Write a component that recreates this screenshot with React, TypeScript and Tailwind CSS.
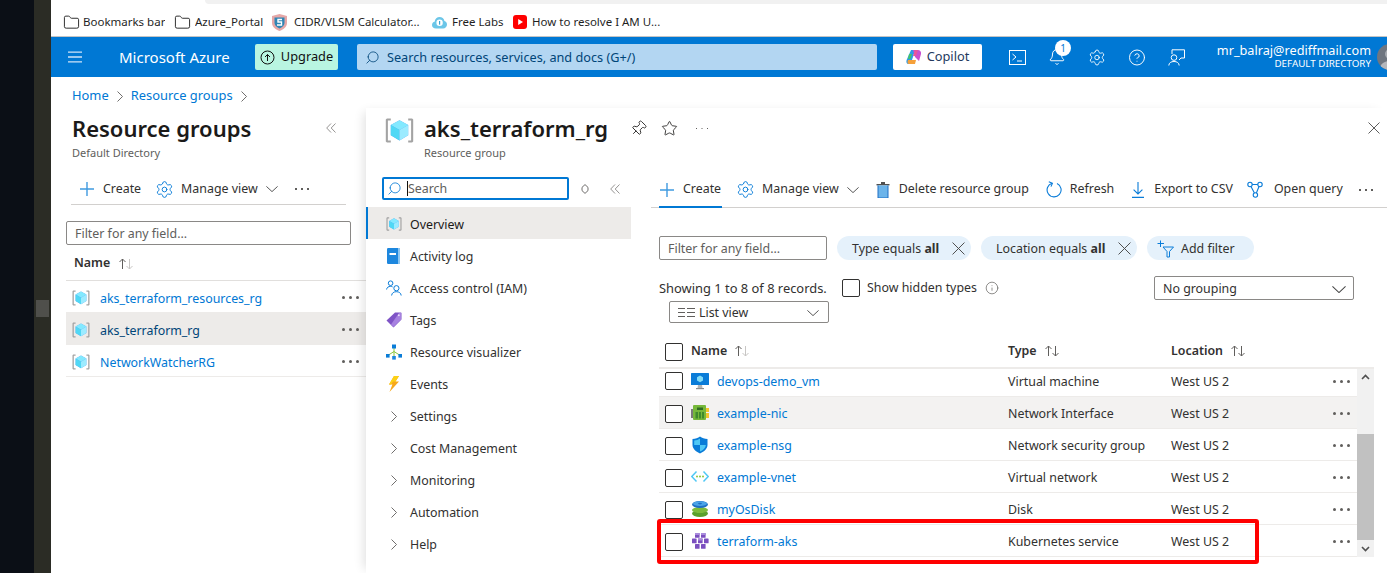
import React from 'react'
import { Bell, CircleHelp, Folder, Info, Pin, Search, Settings, Star } from 'lucide-react'

const RgIcon = ({ size = 18 }: { size?: number }) => (
  <svg width={size} height={size} viewBox="0 0 18 18" fill="none" className="shrink-0">
    <path d="M3.6 1.5H1.2L0.5 2.2V15.8L1.2 16.5H3.6V15.2H1.8V2.8H3.6Z" fill="#a3a3a3" />
    <path d="M14.4 1.5H16.8L17.5 2.2V15.8L16.8 16.5H14.4V15.2H16.2V2.8H14.4Z" fill="#a3a3a3" />
    <path d="M9 2.6L14.4 5.6V12L9 15.2L3.6 12V5.6Z" fill="#5ea0ef" />
    <path d="M9 2.6L14.4 5.6L9 8.7L3.6 5.6Z" fill="#83e9ff" />
    <path d="M3.6 5.6L9 8.7V15.2L3.6 12Z" fill="#50d8f5" />
    <path d="M14.4 5.6L9 8.7V15.2L14.4 12Z" fill="#9cebff" />
  </svg>
)

const VmIcon = () => (
  <svg width="18" height="18" viewBox="0 0 18 18" className="shrink-0">
    <rect x="0" y="1" width="18" height="12" rx="0.6" fill="#0a7cd8" />
    <path d="M9 3.5L12 5.2V8.6L9 10.3L6 8.6V5.2Z" fill="#83dcf7" />
    <path d="M7 13H11L11.5 16H6.5Z" fill="#b5b5b5" />
    <rect x="5" y="16" width="8" height="1.2" fill="#8f8f8f" />
  </svg>
)

const NicIcon = () => (
  <svg width="18" height="18" viewBox="0 0 18 18" className="shrink-0">
    <rect x="0" y="5" width="3" height="9" fill="#7a7a7a" />
    <rect x="15" y="4" width="3" height="4" fill="#f2c52c" />
    <rect x="15" y="9" width="3" height="5" fill="#f2c52c" />
    <rect x="2" y="1" width="13" height="15" rx="1" fill="#76b83a" />
    <rect x="6" y="3.5" width="6" height="2.5" fill="#2f6b22" />
    <path d="M4.5 14.5V8H7V14.5ZM8 14.5V8H10V14.5ZM11 14.5V8H13V14.5Z" fill="#3f8a2c" />
  </svg>
)

const NsgIcon = () => (
  <svg width="18" height="18" viewBox="0 0 18 18" className="shrink-0">
    <path d="M9 0.5C11 2 13.5 2.8 16.5 3V9C16.5 13 12.5 16 9 17.5C5.5 16 1.5 13 1.5 9V3C4.5 2.8 7 2 9 0.5Z" fill="#0a7cd8" />
    <path d="M9 2.5V9H3.2V4.6C5.4 4.3 7.4 3.7 9 2.5Z" fill="#50c8f5" />
    <path d="M9 9H14.8C14.6 12 11.8 14.4 9 15.6Z" fill="#50c8f5" />
  </svg>
)

const VnetIcon = () => (
  <svg width="18" height="18" viewBox="0 0 18 18" fill="none" className="shrink-0">
    <path d="M5.5 3.5L0.8 8.5L5.5 13.5" stroke="#50c8f5" strokeWidth="1.5" />
    <path d="M12.5 3.5L17.2 8.5L12.5 13.5" stroke="#50c8f5" strokeWidth="1.5" />
    <circle cx="6" cy="8.5" r="1" fill="#8cc63f" />
    <circle cx="9" cy="8.5" r="1" fill="#8cc63f" />
    <circle cx="12" cy="8.5" r="1" fill="#8cc63f" />
  </svg>
)

const DiskIcon = () => (
  <svg width="18" height="18" viewBox="0 0 18 18" className="shrink-0">
    <ellipse cx="9" cy="13.5" rx="8" ry="3.5" fill="#5aa02c" />
    <rect x="6" y="8" width="6" height="5" fill="#76b83a" />
    <ellipse cx="9" cy="10" rx="8" ry="3" fill="#7dbb3c" />
    <ellipse cx="9" cy="4.5" rx="8" ry="3.5" fill="#1f6fc4" />
    <ellipse cx="9" cy="3.6" rx="7" ry="2.4" fill="#4aa3e8" />
    <ellipse cx="9" cy="3.6" rx="2" ry="0.8" fill="#1f6fc4" />
  </svg>
)

const AksIcon = () => (
  <svg width="18" height="18" viewBox="0 0 18 18" className="shrink-0">
    {[
      [4, 1],
      [10, 1],
      [1, 6.5],
      [7, 6.5],
      [13, 6.5],
      [4, 12],
      [10, 12],
    ].map(([x, y]) => (
      <rect key={`${x}-${y}`} x={x} y={y} width="4.6" height="4.8" rx="0.6" fill="#7b4fbf" />
    ))}
    <rect x="7" y="6.5" width="4.6" height="2" fill="#a98bdc" />
    <rect x="4" y="1" width="4.6" height="2" fill="#a98bdc" />
    <rect x="10" y="1" width="4.6" height="2" fill="#a98bdc" />
  </svg>
)

const BookIcon = () => (
  <svg width="16" height="16" viewBox="0 0 16 16" className="shrink-0">
    <rect x="1" y="0" width="13" height="16" rx="1.2" fill="#1d87de" />
    <rect x="12" y="0" width="2" height="16" fill="#8cc6f2" />
    <rect x="3.5" y="5" width="6.5" height="2" fill="#fff" />
  </svg>
)

const IamIcon = () => (
  <svg width="16" height="16" viewBox="0 0 16 16" fill="none" stroke="#0a7cd8" strokeWidth="1" className="shrink-0">
    <circle cx="4.6" cy="3.2" r="2.3" />
    <path d="M0.6 9.5C0.8 7.4 2.4 6.4 4.6 6.4C5.4 6.4 6 6.5 6.6 6.9" />
    <circle cx="10.4" cy="8.2" r="2.6" />
    <path d="M5.6 15.5C5.9 12.9 7.8 11.7 10.4 11.7C13 11.7 14.9 12.9 15.2 15.5" />
  </svg>
)

const TagIcon = () => (
  <svg width="16" height="16" viewBox="0 0 16 16" className="shrink-0">
    <path d="M9 0.5H15L15.5 1V7.5L7.5 15.5L0.5 8.5Z" fill="#7f54c6" />
    <path d="M15 1V7.5L7.5 15L5 12.5L13 1Z" fill="#a781e0" />
    <circle cx="12.8" cy="3.2" r="1" fill="#e8dcf8" />
  </svg>
)

const VisualizerIcon = () => (
  <svg width="16" height="16" viewBox="0 0 16 16" className="shrink-0">
    <path d="M8 4V13M8 7.5L2.5 11M8 7.5L13.5 11" stroke="#8cc63f" strokeWidth="1" fill="none" />
    <rect x="6" y="0.5" width="4" height="4" fill="#0a7cd8" />
    <rect x="0" y="10" width="3.6" height="3.6" fill="#0a7cd8" />
    <rect x="12.4" y="10" width="3.6" height="3.6" fill="#0a7cd8" />
    <rect x="6.2" y="12" width="3.6" height="3.6" fill="#1d87de" />
  </svg>
)

const BoltIcon = () => (
  <svg width="16" height="16" viewBox="0 0 16 16" className="shrink-0">
    <path d="M8 0H13L9.5 5.6H13L3.5 16L6.4 8.4H3Z" fill="#f7a81b" />
    <path d="M8 0H13L9.5 5.6H7L5 8.4H3Z" fill="#fcd116" />
  </svg>
)

const QueryIcon = () => (
  <svg width="16" height="18" viewBox="0 0 16 18" fill="none" stroke="#0a7cd8" strokeWidth="1.1" className="ml-[14px] shrink-0">
    <circle cx="3" cy="3.5" r="2.2" />
    <circle cx="13" cy="3.5" r="2.2" />
    <circle cx="8.4" cy="14" r="2.2" />
    <path d="M5.2 3.5H10.8M4 5.5L7.4 12M12 5.5L9.4 12" />
  </svg>
)

const FilterAddIcon = () => (
  <svg width="18" height="18" viewBox="0 0 18 18" fill="none" stroke="#0a7cd8" strokeWidth="1" className="shrink-0">
    <path d="M3.5 0.5V7M0.5 3.5H7" />
    <path d="M6 7H16.5L12.5 11.5V17H10V11.5Z" />
  </svg>
)

const TerminalIcon = () => (
  <svg width="17" height="15" viewBox="0 0 17 15" fill="none" stroke="#fff" strokeWidth="1" className="shrink-0">
    <rect x="0.5" y="0.5" width="16" height="14" />
    <path d="M3.5 4L7 7L3.5 10M8 11H13" />
  </svg>
)

const FeedbackIcon = () => (
  <svg width="17" height="17" viewBox="0 0 17 17" fill="none" stroke="#fff" strokeWidth="1" className="shrink-0">
    <path d="M4 5V0.8H16.5V9H13L11 11" />
    <circle cx="6" cy="8.6" r="2.8" />
    <path d="M0.8 16.5C1 13.8 3 12.5 6 12.5C9 12.5 11 13.8 11.2 16.5" />
  </svg>
)

const CopilotIcon = () => (
  <svg width="16" height="16" viewBox="0 0 16 16" className="shrink-0">
    <path d="M5 1H9L7 8L4.5 15H2.5C0.5 15 0 13 0.6 11Z" fill="#2c9be8" />
    <path d="M7 1H12C14 1 15.5 3 15 5L13 12L9 8Z" fill="#c84fd0" />
    <path d="M2 11H10L9 15H3C1.5 15 1 13 2 11Z" fill="#f6a03a" />
    <path d="M9 1H12L10 7H7Z" fill="#e7569a" />
    <path d="M3 5H6L4.5 10H2Z" fill="#43c36b" />
  </svg>
)

const ShieldIcon = () => (
  <svg width="15" height="17" viewBox="0 0 15 17" className="shrink-0">
    <path d="M7.5 0L15 2V9C15 13 11 15.6 7.5 17C4 15.6 0 13 0 9V2Z" fill="#e5a7a7" />
    <path d="M2.5 3.5H12.5V9C12.5 11.5 10 13.5 7.5 14.5C5 13.5 2.5 11.5 2.5 9Z" fill="#2f86b5" />
    <path d="M10 5.5H6V8H9.5V11H5" stroke="#fff" strokeWidth="1.4" fill="none" />
  </svg>
)

const LabsIcon = () => (
  <svg width="15" height="13" viewBox="0 0 15 13" className="shrink-0">
    <path d="M4 12.5C1.5 12.5 0 11 0 9C0 7.2 1.2 6 2.6 5.8C3 2.8 5 1 7.6 1C10 1 12 2.6 12.4 5C14 5.4 15 6.8 15 8.6C15 11 13.4 12.5 11 12.5Z" fill="#6cc6e8" />
    <circle cx="7.6" cy="6.8" r="3.2" fill="#fff" />
    <rect x="7" y="5" width="1.2" height="3.6" fill="#3ba4d4" />
  </svg>
)

const YoutubeIcon = () => (
  <svg width="14" height="14" viewBox="0 0 14 14" className="shrink-0">
    <rect width="14" height="14" rx="3" fill="#f00" />
    <path d="M5.2 4L10 7L5.2 10Z" fill="#fff" />
  </svg>
)

const PlusIcon = ({ className = '' }: { className?: string }) => (
  <svg width="14" height="14" viewBox="0 0 14 14" fill="none" stroke="#3f9ae0" strokeWidth="1.4" className={`shrink-0 ${className}`}>
    <path d="M7 0V14M0 7H14" />
  </svg>
)

const XIcon = ({ size = 12, className = '' }: { size?: number; className?: string }) => (
  <svg width={size} height={size} viewBox="0 0 12 12" fill="none" stroke="#4a4a4a" strokeWidth="0.9" className={`shrink-0 ${className}`}>
    <path d="M0.5 0.5L11.5 11.5M11.5 0.5L0.5 11.5" />
  </svg>
)

const ChevronDownIcon = ({ size = 12, className = '' }: { size?: number; className?: string }) => (
  <svg width={size} height={size / 2} viewBox="0 0 12 6" fill="none" stroke="#444" strokeWidth="0.9" className={`shrink-0 ${className}`}>
    <path d="M0.4 0.4L6 5.6L11.6 0.4" />
  </svg>
)

const ChevronRightIcon = ({ className = '' }: { className?: string }) => (
  <svg width="6" height="11" viewBox="0 0 6 11" fill="none" stroke="#605e5c" strokeWidth="0.9" className={`shrink-0 ${className}`}>
    <path d="M0.5 0.5L5.5 5.5L0.5 10.5" />
  </svg>
)

const DoubleLeftIcon = ({ className = '' }: { className?: string }) => (
  <svg width="10" height="10" viewBox="0 0 10 10" fill="none" stroke="#8a8886" strokeWidth="0.9" className={`shrink-0 ${className}`}>
    <path d="M5 0.5L0.7 5L5 9.5M9.5 0.5L5.2 5L9.5 9.5" />
  </svg>
)

const UpDownIcon = () => (
  <svg width="8" height="10" viewBox="0 0 8 10" fill="none" stroke="#605e5c" strokeWidth="0.9" className="ml-[12px] shrink-0">
    <path d="M4 0.6L7 3.4V6.6L4 9.4L1 6.6V3.4Z" />
  </svg>
)

const TrashIcon = () => (
  <svg width="14" height="16" viewBox="0 0 14 16" className="ml-[17px] shrink-0">
    <rect x="5" y="0" width="4" height="2" fill="#505050" />
    <rect x="0.5" y="2" width="13" height="1.4" fill="#505050" />
    <rect x="2" y="3.4" width="10" height="12.6" fill="#6cb4ea" />
    <path d="M2 3.4V16H12V3.4" fill="none" stroke="#1f6fc4" />
  </svg>
)

const RefreshIcon = () => (
  <svg width="16" height="17" viewBox="0 0 16 17" fill="none" stroke="#0a7cd8" strokeWidth="1.1" className="ml-[17px] shrink-0">
    <path d="M6 2.2A7 7 0 1 0 11 2.5" />
    <path d="M2.8 0.8L6.4 2.2L5 5.6" />
  </svg>
)

const DownloadIcon = () => (
  <svg width="12" height="16" viewBox="0 0 12 16" fill="none" stroke="#0a7cd8" strokeWidth="1.1" className="ml-[18px] shrink-0">
    <path d="M6 0V12M1.6 7.6L6 12L10.4 7.6M0 15.4H12" />
  </svg>
)

const MenuIcon = () => (
  <svg width="14" height="12" viewBox="0 0 14 12" stroke="#cfe4f7" strokeWidth="1.3" className="ml-[17px] shrink-0">
    <path d="M0 1.2H14M0 6H14M0 10.8H14" />
  </svg>
)

const Avatar = () => (
  <svg width="26" height="26" viewBox="0 0 26 26" className="ml-[6px] shrink-0">
    <clipPath id="avatar-clip">
      <circle cx="13" cy="13" r="13" />
    </clipPath>
    <g clipPath="url(#avatar-clip)">
      <rect width="26" height="26" fill="#6f7680" />
      <circle cx="13" cy="10" r="5" fill="#a8acb2" />
      <ellipse cx="13" cy="24" rx="10" ry="7" fill="#b4b7bc" />
    </g>
  </svg>
)

const Dots = () => (
  <span className="flex w-[17px] shrink-0 items-center justify-between">
    <span className="size-[3px] rounded-full bg-[#605e5c]" />
    <span className="size-[3px] rounded-full bg-[#605e5c]" />
    <span className="size-[3px] rounded-full bg-[#605e5c]" />
  </span>
)

const ToolbarDots = ({ small, className = '' }: { small?: boolean; className?: string }) => (
  <svg width={small ? 12 : 14} height={small ? 1 : 2} viewBox={small ? '0 0 12 1' : '0 0 14 2'} fill="#605e5c" className={`shrink-0 ${className}`}>
    <rect x="0" width={small ? 1 : 2} height="2" />
    <rect x={small ? 5.5 : 6} width={small ? 1 : 2} height="2" />
    <rect x={small ? 11 : 12} width={small ? 1 : 2} height="2" />
  </svg>
)

const SortArrows = ({ dim }: { dim?: boolean }) => (
  <svg width="16" height="12" viewBox="0 0 16 12" fill="none" className="shrink-0">
    <path d="M4.5 11V1M1.5 4L4.5 1L7.5 4" stroke="#605e5c" />
    <path d="M11.5 1V11M8.5 8L11.5 11L14.5 8" stroke={dim ? '#c8c6c4' : '#605e5c'} />
  </svg>
)

const Bookmark = ({ icon, label, className }: { icon: React.ReactNode; label: string; className: string }) => (
  <div className={`flex shrink-0 items-center ${className}`}>
    {icon}
    <span className="truncate">{label}</span>
  </div>
)

const navItems: { label: string; icon: React.ReactNode }[] = [
  { label: 'Activity log', icon: <BookIcon /> },
  { label: 'Access control (IAM)', icon: <IamIcon /> },
  { label: 'Tags', icon: <TagIcon /> },
  { label: 'Resource visualizer', icon: <VisualizerIcon /> },
  { label: 'Events', icon: <BoltIcon /> },
]

const navGroups = ['Settings', 'Cost Management', 'Monitoring', 'Automation', 'Help']

const resources = [
  { name: 'devops-demo_vm', type: 'Virtual machine', icon: <VmIcon /> },
  { name: 'example-nic', type: 'Network Interface', icon: <NicIcon /> },
  { name: 'example-nsg', type: 'Network security group', icon: <NsgIcon /> },
  { name: 'example-vnet', type: 'Virtual network', icon: <VnetIcon /> },
  { name: 'myOsDisk', type: 'Disk', icon: <DiskIcon /> },
  { name: 'terraform-aks', type: 'Kubernetes service', icon: <AksIcon /> },
]

const groups = ['aks_terraform_resources_rg', 'aks_terraform_rg', 'NetworkWatcherRG']

const Checkbox = () => <span className="block size-[18px] shrink-0 rounded-[2px] border border-[#323130] bg-white" />

const App = () => {
  return (
    <div className="flex h-[573px] w-[1387px] overflow-hidden whitespace-nowrap bg-white font-['Noto_Sans',sans-serif] text-[12.4px] text-[#323130]">
      {/* desktop strip on the far left */}
      <div className="flex w-[51px] shrink-0">
        <div className="w-[34px] bg-[#0b0f16]" />
        <div className="w-[17px] bg-[#2b2c25] pl-[2px] pt-[300px]">
          <div className="h-[17px] w-[13px] bg-[#4f4f4b]" />
        </div>
      </div>

      <div className="flex min-w-0 flex-1 flex-col">
        {/* browser bookmarks */}
        <div className="flex h-[37px] shrink-0 flex-col border-b border-[#c4c4c4]">
          <div className="ml-[154px] h-[4px] rounded-bl-md bg-[#f1f1f1]" />
          <div className="flex h-[32px] items-center pl-[12px] pt-[4px] text-[11.5px] text-[#1f1f1f]">
            <Bookmark icon={<Folder size={17} strokeWidth={1.3} />} label="Bookmarks bar" className="w-[111px] gap-[3px]" />
            <Bookmark icon={<Folder size={17} strokeWidth={1.3} />} label="Azure_Portal" className="w-[98px] gap-[4px]" />
            <Bookmark icon={<ShieldIcon />} label="CIDR/VLSM Calculator..." className="w-[160px] gap-[7px]" />
            <Bookmark icon={<LabsIcon />} label="Free Labs" className="w-[81px] gap-[5px]" />
            <Bookmark icon={<YoutubeIcon />} label="How to resolve I AM U..." className="w-[150px] gap-[5px]" />
          </div>
        </div>

        {/* portal header */}
        <header className="flex h-[40px] shrink-0 items-center overflow-hidden bg-[#0078d4] text-white">
          <MenuIcon />
          <span className="ml-[37px] w-[136px] shrink-0 text-[15px]">Microsoft Azure</span>
          <div className="flex h-[26px] w-[83px] shrink-0 items-center justify-center gap-[6px] rounded-[2px] bg-[#b9f5e1] text-[12.8px] text-[#111]">
            <svg width="15" height="15" viewBox="0 0 15 15" fill="none" stroke="#111" strokeWidth="1" className="shrink-0">
              <circle cx="7.5" cy="7.5" r="6.5" />
              <path d="M7.5 11V4.5M5 7L7.5 4.5L10 7" />
            </svg>
            Upgrade
          </div>
          <div className="ml-[19px] flex h-[26px] w-[520px] shrink-0 items-center gap-[7px] rounded-[2px] bg-[#b3d6f2] pl-[8px] pt-[1px] text-[12.7px] text-[#004578]">
            <Search size={15} strokeWidth={1.3} className="-scale-x-100" />
            Search resources, services, and docs (G+/)
          </div>
          <div className="ml-[16px] flex h-[26px] w-[89px] shrink-0 items-center justify-center gap-[5px] rounded-[2px] bg-white text-[12.8px] text-[#243a5e]">
            <CopilotIcon />
            Copilot
          </div>
          <div className="ml-[27px] flex w-[176px] shrink-0 items-center gap-[22px]">
            <TerminalIcon />
            <div className="relative">
              <Bell size={18} strokeWidth={1.3} />
              <span className="absolute -top-[8px] left-[7px] flex size-[16px] items-center justify-center rounded-full bg-white text-[10px] text-[#0078d4]">
                1
              </span>
            </div>
            <Settings size={19} strokeWidth={1.2} />
            <CircleHelp size={19} strokeWidth={1.3} />
            <FeedbackIcon />
          </div>
          <div className="flex w-[186px] shrink-0 flex-col items-end leading-[14px]">
            <span className="text-[12.7px]">mr_balraj@rediffmail.com</span>
            <span className="text-[9.8px]">DEFAULT DIRECTORY</span>
          </div>
          <Avatar />
        </header>

        {/* breadcrumb */}
        <nav className="flex h-[31px] shrink-0 items-center gap-[8px] pl-[21px] pt-[7px] text-[12.9px] text-[#0078d4]">
          <span>Home</span>
          <ChevronRightIcon />
          <span>Resource groups</span>
          <ChevronRightIcon />
        </nav>

        <div className="flex min-h-0 flex-1">
          {/* resource groups blade */}
          <aside className="w-[315px] shrink-0 pl-[15px] pt-[4px]">
            <div className="flex items-center pl-[6px] pr-[30px]">
              <h1 className="flex-1 text-[22px] font-semibold leading-[32px] text-[#1b1a19]">Resource groups</h1>
              <DoubleLeftIcon />
            </div>
            <p className="h-[17px] pl-[6px] pt-[1px] text-[11px] leading-[16px] text-[#605e5c]">Default Directory</p>
            <div className="ml-[5px] mr-[20px] mt-[10px] flex h-[34px] items-center border-b border-[#d2d0ce] pl-[9px] pt-[3px]">
              <PlusIcon />
              <span className="ml-[9px]">Create</span>
              <Settings size={19} strokeWidth={1.2} className="ml-[14px] shrink-0 text-[#0a7cd8]" />
              <span className="ml-[7px]">Manage view</span>
              <ChevronDownIcon className="ml-[8px]" />
              <ToolbarDots className="ml-[17px]" />
            </div>
            <div className="mt-[16px] flex h-[24px] w-[285px] items-center rounded-[2px] border border-[#8a8886] pl-[8px] pt-[2px] text-[#605e5c]">
              Filter for any field...
            </div>
            <div className="flex h-[36px] items-center gap-[8px] border-b border-[#e1dfdd] pl-[8px] pt-[2px] font-semibold">
              Name
              <SortArrows dim />
            </div>
            {groups.map((group, i) => (
              <div
                key={group}
                className={`flex h-[32px] items-center border-b border-[#edebe9] pl-[6px] pr-[7px] pt-[2px] ${i === 1 ? 'bg-[#edebe9] text-[#004578]' : 'text-[#0078d4]'}`}
              >
                <RgIcon />
                <span className="ml-[10px] flex-1 pt-[4px]">{group}</span>
                <Dots />
              </div>
            ))}
          </aside>

          {/* resource group blade */}
          <main className="relative flex min-w-0 flex-1 flex-col shadow-[-6px_0_10px_-4px_rgba(0,0,0,0.12)]">
            <div className="flex h-[64px] shrink-0 pt-[4px]">
              <div className="ml-[19px] mr-[10px] mt-[4px]">
                <RgIcon size={29} />
              </div>
              <div className="flex-1">
                <div className="flex items-center">
                  <h1 className="text-[22px] font-semibold leading-[32px] text-[#1b1a19]">aks_terraform_rg</h1>
                  <Pin size={17} strokeWidth={1.3} className="ml-[22px] rotate-45" />
                  <Star size={17} strokeWidth={1.3} className="ml-[14px]" />
                  <ToolbarDots small className="ml-[18px]" />
                  <XIcon className="ml-auto mr-[7px]" />
                </div>
                <p className="pt-[1px] text-[11px] leading-[16px] text-[#605e5c]">Resource group</p>
              </div>
            </div>

            <div className="flex min-h-0 flex-1">
              {/* resource menu */}
              <div className="w-[265px] shrink-0 pt-[5px]">
                <div className="flex items-center pl-[16px]">
                  <div className="flex h-[23px] w-[187px] shrink-0 items-center rounded-[2px] border-2 border-[#0078d4] pl-[3px] text-[#605e5c]">
                    <Search size={15} strokeWidth={1.3} className="-scale-x-100 text-[#0078d4]" />
                    <span className="ml-[5px] h-[15px] w-px bg-[#111]" />
                    <span className="pt-[2px]">Search</span>
                  </div>
                  <UpDownIcon />
                  <DoubleLeftIcon className="ml-[21px]" />
                </div>
                <div className="mt-[7px] flex h-[32px] items-center border-l-2 border-[#0078d4] bg-[#edebe9] pl-[18px] pt-[2px] text-[#1b1a19]">
                  <RgIcon size={16} />
                  <span className="ml-[8px] pt-[2px]">Overview</span>
                </div>
                {navItems.map((item) => (
                  <div key={item.label} className="flex h-[32px] items-center pl-[20px] pt-[2px]">
                    {item.icon}
                    <span className="ml-[8px] pt-[2px]">{item.label}</span>
                  </div>
                ))}
                {navGroups.map((label) => (
                  <div key={label} className="flex h-[32px] items-center pl-[25px] pt-[2px]">
                    <ChevronRightIcon />
                    <span className="ml-[13px] pt-[2px]">{label}</span>
                  </div>
                ))}
              </div>

              {/* overview */}
              <div className="relative ml-[20px] min-w-0 flex-1">
                <div className="relative flex h-[36px] items-center border-b border-[#d2d0ce] pl-[9px]">
                  <PlusIcon />
                  <span className="ml-[9px]">Create</span>
                  <Settings size={19} strokeWidth={1.2} className="ml-[15px] shrink-0 text-[#0a7cd8]" />
                  <span className="ml-[7px]">Manage view</span>
                  <ChevronDownIcon className="ml-[8px]" />
                  <TrashIcon />
                  <span className="ml-[9px]">Delete resource group</span>
                  <RefreshIcon />
                  <span className="ml-[8px]">Refresh</span>
                  <DownloadIcon />
                  <span className="ml-[10px]">Export to CSV</span>
                  <QueryIcon />
                  <span className="ml-[11px]">Open query</span>
                  <ToolbarDots className="ml-[16px]" />
                  <span className="absolute -bottom-px left-[8px] h-[2px] w-[63px] bg-[#0078d4]" />
                </div>

                <div className="ml-[8px] mt-[28px] flex h-[24px] items-center gap-[10px]">
                  <div className="flex h-[24px] w-[168px] items-center rounded-[2px] border border-[#8a8886] pl-[8px] pt-[2px] text-[#605e5c]">
                    Filter for any field...
                  </div>
                  <div className="flex h-[24px] w-[134px] items-center justify-between rounded-full bg-[#e5f1fb] pl-[15px] pr-[6px] pt-[2px]">
                    <span>
                      Type equals <b>all</b>
                    </span>
                    <XIcon size={13} className="-mt-[2px]" />
                  </div>
                  <div className="flex h-[24px] w-[156px] items-center justify-between rounded-full bg-[#e5f1fb] pl-[15px] pr-[6px] pt-[2px]">
                    <span>
                      Location equals <b>all</b>
                    </span>
                    <XIcon size={13} className="-mt-[2px]" />
                  </div>
                  <div className="flex h-[24px] w-[107px] items-center gap-[6px] rounded-full bg-[#e5f1fb] pl-[10px] pt-[2px]">
                    <FilterAddIcon />
                    Add filter
                  </div>
                </div>

                <div className="ml-[8px] mt-[16px] flex items-start">
                  <div className="w-[183px] shrink-0">
                    <div className="flex h-[24px] items-center pt-[2px] text-[12.9px]">Showing 1 to 8 of 8 records.</div>
                    <div className="ml-[10px] mt-px flex h-[22px] w-[160px] items-center rounded-[2px] border border-[#8a8886] pl-[8px] pt-[2px]">
                      <svg width="18" height="12" viewBox="0 0 18 12" fill="#605e5c" className="mr-[3px] shrink-0">
                        <path d="M0 1H7V2H0ZM9 1H17V2H9ZM0 5H7V6H0ZM9 5H17V6H9ZM0 9H7V10H0ZM9 9H17V10H9Z" />
                      </svg>
                      <span className="flex-1">List view</span>
                      <ChevronDownIcon className="mr-[9px]" />
                    </div>
                  </div>
                  <div className="mt-[2px] flex items-center">
                    <Checkbox />
                    <span className="ml-[7px] pt-[1px]">Show hidden types</span>
                    <Info size={14} strokeWidth={1.2} className="ml-[8px] text-[#605e5c]" />
                  </div>
                  <div className="ml-auto mr-[33px] flex h-[24px] w-[200px] items-center rounded-[2px] border border-[#8a8886] pl-[8px] pt-[2px]">
                    <span className="flex-1">No grouping</span>
                    <ChevronDownIcon size={14} className="mr-[7px]" />
                  </div>
                </div>

                <div className="ml-[8px] mr-[13px] mt-[9px]">
                  <div className="flex h-[37px] items-center border-b-2 border-[#edebe9] pl-[6px] pt-[4px] font-semibold">
                    <div className="w-[26px] shrink-0"><Checkbox /></div>
                    <div className="flex w-[317px] shrink-0 items-center gap-[7px]">
                      Name
                      <SortArrows dim />
                    </div>
                    <div className="flex w-[163px] shrink-0 items-center gap-[7px]">
                      Type
                      <SortArrows />
                    </div>
                    <div className="flex items-center gap-[7px]">
                      Location
                      <SortArrows />
                    </div>
                  </div>
                  <div className="flex">
                    <div className="min-w-0 flex-1">
                      {resources.map((r, i) => (
                        <div
                          key={r.name}
                          className={`flex items-center border-b border-[#edebe9] pl-[6px] ${i === 0 ? 'h-[28px] pb-[3px]' : 'h-[32px] pt-[2px]'} ${i === 1 ? 'bg-[#f3f2f1]' : ''}`}
                        >
                          <div className="w-[26px] shrink-0"><Checkbox /></div>
                          <div className="flex w-[317px] shrink-0 items-center">
                            {r.icon}
                            <span className="ml-[8px] pt-[2px] text-[#0078d4]">{r.name}</span>
                          </div>
                          <span className="w-[163px] shrink-0 pt-[2px]">{r.type}</span>
                          <span className="flex-1 pt-[2px]">West US 2</span>
                          <span className="mr-[7px]"><Dots /></span>
                        </div>
                      ))}
                    </div>
                    <div className="flex w-[17px] shrink-0 flex-col items-center bg-[#f1f1f1]">
                      <svg width="9" height="6" viewBox="0 0 9 6" className="mt-[5px] shrink-0" fill="none" stroke="#505050" strokeWidth="1.6">
                        <path d="M1 5L4.5 1.5L8 5" />
                      </svg>
                      <div className="mt-[54px] h-[106px] w-full shrink-0 bg-[#c1c1c1]" />
                      <svg width="9" height="6" viewBox="0 0 9 6" className="mt-[6px] shrink-0" fill="none" stroke="#505050" strokeWidth="1.6">
                        <path d="M1 1L4.5 4.5L8 1" />
                      </svg>
                    </div>
                  </div>
                </div>

                {/* red annotation around the AKS row */}
                <div className="absolute left-[6px] top-[347px] h-[45px] w-[602px] rounded-[3px] border-4 border-[#f00]" />
              </div>
            </div>
          </main>
        </div>
      </div>
    </div>
  )
}

export default App
